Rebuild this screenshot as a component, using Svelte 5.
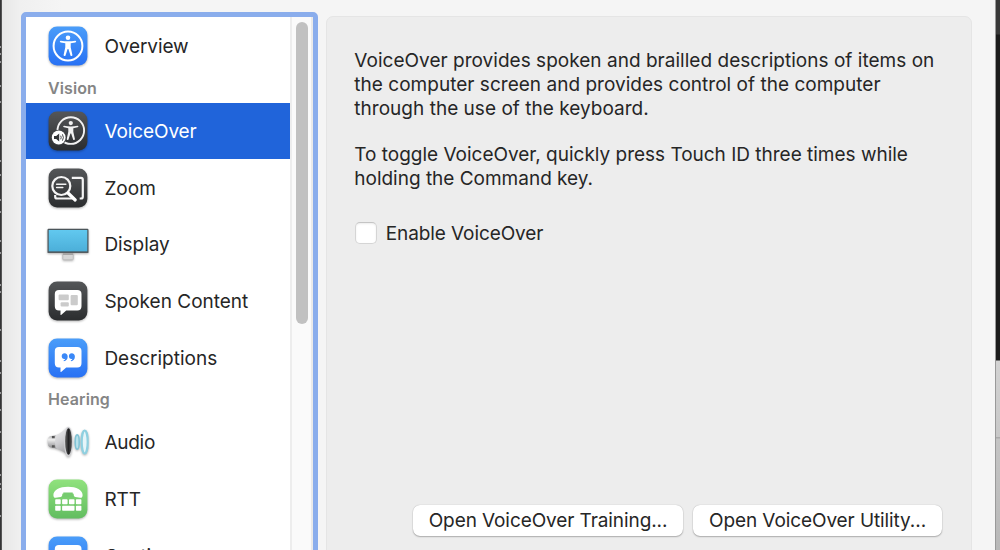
<script>
  const sections = [
    { items: [{ id: 'overview', label: 'Overview', ls: -0.1 }] },
    {
      title: 'Vision',
      items: [
        { id: 'voiceover', label: 'VoiceOver', selected: true, ls: -0.1 },
        { id: 'zoom', label: 'Zoom', ls: 0 },
        { id: 'display', label: 'Display', ls: -0.05 },
        { id: 'spoken', label: 'Spoken Content', ls: 0 },
        { id: 'descriptions', label: 'Descriptions', ls: 0 }
      ]
    },
    {
      title: 'Hearing',
      items: [
        { id: 'audio', label: 'Audio', ls: -0.25 },
        { id: 'rtt', label: 'RTT', ls: -0.1 },
        { id: 'captions', label: 'Captions', ls: -0.05 }
      ]
    }
  ];
  const tiles = {
    overview: 'blue', voiceover: 'dark', zoom: 'dark', spoken: 'dark',
    descriptions: 'blue', rtt: 'green', captions: 'blue'
  };
  const marks = [46, 53, 61, 85, 101, 139, 160, 174, 199, 211, 240, 252, 284, 291, 329, 360, 372, 392, 409, 431, 449, 474, 483, 488, 515];
</script>

{#snippet person()}
  <circle cx="0" cy="-8.2" r="2.3" />
  <path d="M-7.2-5.3 Q0-4 7.2-5.3 Q8.2-5.3 8.200-4.500 Q8.100-3.700 7.300-3.600 L2.700-2.700 V1.200 L4.400 9 Q4.400 10.100 3.500 10.100 Q2.700 10.100 2.400 9.200 L.4 3.100 H-.4 L-2.400 9.200 Q-2.700 10.100-3.500 10.100 Q-4.400 10.100-4.400 9 L-2.700 1.200 V-2.700 L-7.300-3.600 Q-8.100-3.700-8.200-4.500 Q-8.200-5.300-7.200-5.300Z" />
{/snippet}

<svg class="defs" width="0" height="0" aria-hidden="true">
  <defs>
    <linearGradient id="blue" x2="0" y2="1"><stop stop-color="#4a9df9" /><stop offset="1" stop-color="#2871f4" /></linearGradient>
    <linearGradient id="dark" x2="0" y2="1"><stop stop-color="#545658" /><stop offset="1" stop-color="#2b2d2f" /></linearGradient>
    <linearGradient id="green" x2="0" y2="1"><stop stop-color="#90e27d" /><stop offset="1" stop-color="#62bd60" /></linearGradient>
    <linearGradient id="screen" x2="0" y2="1"><stop stop-color="#62c9f0" /><stop offset="1" stop-color="#4baed8" /></linearGradient>
    <linearGradient id="cone" x2="0.3" y2="1"><stop stop-color="#f2f2f3" /><stop offset=".55" stop-color="#cfcfd2" /><stop offset="1" stop-color="#a3a3a6" /></linearGradient>
    <linearGradient id="rear" x2="0" y2="1"><stop stop-color="#b0b0b2" /><stop offset=".35" stop-color="#eee" /><stop offset="1" stop-color="#858588" /></linearGradient>
    <linearGradient id="mouth"><stop stop-color="#666" /><stop offset=".5" stop-color="#222224" /><stop offset="1" stop-color="#555" /></linearGradient>
  </defs>
</svg>

<div class="desktop">
  <div class="edge left">
    {#each marks as y}<i style="top:{y}px"></i>{/each}
  </div>
  <main>
    <aside>
      <nav>
        {#each sections as section}
          {#if section.title}<h2>{section.title}</h2>{/if}
          {#each section.items as item}
            <div class="row" class:selected={item.selected}>
              <svg class="icon" width="44" height="44" viewBox="0 0 44 44">
                {#if tiles[item.id]}
                  <rect x="2.6" y="2.6" width="38.8" height="38.8" rx="8.5" fill="url(#{tiles[item.id]})" />
                {/if}
                {#if item.id === 'overview'}
                  <circle cx="22" cy="22" r="14.4" fill="none" stroke="#fff" stroke-width="2" />
                  <g fill="#fff" transform="translate(22 22)">{@render person()}</g>
                {:else if item.id === 'voiceover'}
                  <circle cx="24.8" cy="21.6" r="13.3" fill="none" stroke="#f2f2f2" stroke-width="1.9" />
                  <g fill="#f2f2f2" transform="translate(24.8 21.7) scale(.93)">{@render person()}</g>
                  <circle cx="12.7" cy="28.5" r="7.8" fill="#404244" />
                  <circle cx="12.7" cy="28.5" r="6.9" fill="#fff" />
                  <path d="M8 27h2.2l3-2.6v8.2l-3-2.6H8Z" fill="#333537" />
                  <path d="M14.7 26.7q1 1.8 0 3.6M16.4 25.3q2 3.2 0 6.4" fill="none" stroke="#333537" stroke-width=".9" />
                {:else if item.id === 'zoom'}
                  <path d="M25.8 11.9H35q1.8 0 1.8 1.8v17q0 1.8-1.8 1.8h-1.3M27 32.5H11q-1.8 0-1.8-1.8V29" fill="none" stroke="#f4f4f4" stroke-width="2.2" />
                  <circle cx="15.3" cy="20" r="9" fill="none" stroke="#f4f4f4" stroke-width="2.2" />
                  <path d="m22 27 7.2 7" stroke="#fff" stroke-width="3.2" stroke-linecap="round" />
                  <path d="M10.6 18.3h9.2M10.6 21.6h6.2" stroke="#f4f4f4" stroke-width="1.5" stroke-linecap="round" />
                {:else if item.id === 'display'}
                  <path d="M16.8 31h10.4v6q0 .8-.8.8h-8.8q-.8 0-.8-.8Z" fill="#d6d6d6" stroke="#b5b5b5" stroke-width=".7" />
                  <path d="M17 31h10v2H17Z" fill="#a5a5a5" />
                  <rect x="2.1" y="7.4" width="39.8" height="22.7" rx=".5" fill="url(#screen)" stroke="#4b555a" stroke-width="1.2" />
                  <path d="M1.6 30.3h40.8" stroke="#555c60" stroke-width="1.2" />
                {:else if item.id === 'spoken'}
                  <path d="M13 10.9h18.3q4.2 0 4.2 4.2v12.2q0 4.2-4.2 4.2H20.2l-4.8 4.3q-.9.8-.9-.4v-3.9H13q-4.2 0-4.2-4.2V15.1q0-4.2 4.2-4.2Z" fill="#fff" />
                  <rect x="12.6" y="15.5" width="10.2" height="5.8" rx="1" fill="#cbcbcb" />
                  <rect x="24.6" y="16" width="7.2" height="10.3" rx="1" fill="#cbcbcb" />
                  <rect x="14.6" y="23.2" width="8.2" height="4.4" rx="1" fill="#cbcbcb" />
                {:else if item.id === 'descriptions'}
                  <path d="M13 10.9h18.3q4.2 0 4.2 4.2v12.2q0 4.2-4.2 4.2H20.2l-4.8 4.3q-.9.8-.9-.4v-3.9H13q-4.2 0-4.2-4.2V15.1q0-4.2 4.2-4.2Z" fill="#fff" />
                  <g fill="#3a88f7">
                    <path d="M18.5 17.2c2 0 3.2 1.5 3.2 3.5 0 2.4-1.6 4.3-3.8 4.6l-.4-.9q1.6-.5 1.8-1.7-.4.2-1 .2c-1.6 0-2.6-1.1-2.6-2.7 0-1.7 1.2-3 2.8-3Z" />
                    <path d="M25.700 17.200c2 0 3.200 1.500 3.200 3.500 0 2.400-1.600 4.300-3.800 4.600l-.4-.9q1.600-.5 1.800-1.700-.4.2-1 .2c-1.600 0-2.600-1.100-2.600-2.700 0-1.700 1.200-3 2.800-3Z" />
                  </g>
                {:else if item.id === 'audio'}
                  <path d="M4 16.3 11 15v13.5l-7-1.200Q1.700 26.500 1.700 21.800T4 16.300Z" fill="url(#rear)" />
                  <path d="M9.700 15.200Q16 13.200 20.700 7.300L23 36.400Q17.500 30.700 9.700 28.300Q8.200 21.700 9.700 15.200Z" fill="url(#cone)" />
                  <path d="M7.300 16v2.200M7.300 25.300v2.200" stroke="#555" stroke-width="2.800" />
                  <ellipse cx="22.300" cy="21.800" rx="4.300" ry="15" fill="#d0d0d3" />
                  <ellipse cx="22.500" cy="21.500" rx="3.400" ry="13.200" fill="url(#mouth)" />
                  <ellipse cx="31.200" cy="22" rx="2" ry="7.100" fill="#b9e2eb" stroke="#82c4d6" stroke-width="1.600" />
                  <ellipse cx="38.700" cy="22" rx="3" ry="11.500" fill="#e6f5f9" stroke="#8fd0e0" stroke-width="2.200" />
                {:else if item.id === 'rtt'}
                  <path d="M22 9.800c8.500 0 14.600 3.500 14.600 8.100 0 2-.8 3-2.200 2.800l-5-.7q-1.500-.2-1.600-1.700l-.1-1.500q-5.700-1.600-11.400 0l-.1 1.500q-.1 1.500-1.600 1.700l-5 .7q-2.200.2-2.200-2.800c0-4.600 6.100-8.100 14.600-8.100Z" fill="#fff" />
                  <path d="M17.300 15.600h9.400v2.600l2.200 2.200H15.100l2.200-2.200Z" fill="#76cb6f" />
                  <g fill="#fff">
                    {#each [9.2, 16.1, 23, 29.9] as x}<rect {x} y="22.200" width="5.500" height="5" rx=".8" />{/each}
                    <rect x="9.200" y="28.800" width="5.500" height="5" rx=".8" />
                    <rect x="16.100" y="28.800" width="12.400" height="5" rx=".8" />
                    <rect x="29.900" y="28.800" width="5.500" height="5" rx=".8" />
                  </g>
                {:else if item.id === 'captions'}
                  <rect x="8.800" y="10.900" width="26.700" height="22" rx="4" fill="#fff" />
                {/if}
              </svg>
              <span style="letter-spacing:{item.ls}px">{item.label}</span>
            </div>
          {/each}
        {/each}
      </nav>
      <div class="track"><div class="thumb"></div></div>
    </aside>
    <section>
      <p class="about">VoiceOver provides spoken and brailled descriptions of items on<br />the computer screen and provides control of the computer<br />through the use of the keyboard.</p>
      <p>To toggle VoiceOver, quickly press Touch ID three times while<br />holding the Command key.</p>
      <div class="check"><span class="box"></span><span>Enable VoiceOver</span></div>
      <footer>
        <button class="training">Open VoiceOver Training...</button>
        <button class="utility">Open VoiceOver Utility...</button>
      </footer>
    </section>
  </main>
  <div class="edge right"></div>
</div>

<style>
  :global(body) { margin: 0; overflow: hidden; }
  .defs { position: absolute; }
  .desktop {
    display: flex; width: 1000px; height: 550px; overflow: hidden;
    font-family: Inter, "Liberation Sans", sans-serif; font-size: 19px; color: #262626;
  }
  .edge { flex: none; box-sizing: border-box; }
  .left { position: relative; width: 2px; background: #343436; border-right: 1px solid #555; overflow: hidden; }
  .left i { position: absolute; left: 0; width: 2px; height: 2px; background: #98989a; }
  .right {
    width: 5px; border-left: 1px solid #999;
    background: linear-gradient(#383838 0 34px, #1b1b1b 35px 360px, #d2d2d2 361px, #c8c8c8 437px, #aaa 437px 438px, #c4c4c4 439px, #b8b8b8);
  }
  main {
    flex: 1; display: flex; box-sizing: border-box; padding: 12px 0 0 19px; height: 550px;
    background: linear-gradient(90deg, #e7e7e7, #f0f0f0 18px, #f5f5f5 60px);
  }
  aside {
    flex: none; display: flex; box-sizing: border-box; width: 297px; height: 560px;
    border: 5px solid #8aadec; border-radius: 5px 5px 0 0; background: #fff; overflow: hidden;
  }
  nav { width: 264px; padding-top: 1px; }
  h2 {
    margin: 0; padding-left: 22px; height: 28.3px; line-height: 27px;
    font-size: 16px; font-weight: 600; color: #858585; letter-spacing: .1px;
  }
  .row { display: flex; align-items: center; height: 56.6px; padding-left: 20.4px; box-sizing: border-box; }
  .row span { margin-left: 14px; padding-top: 1px; line-height: 25px; white-space: nowrap; }
  .selected { background: #2064da; color: #fff; }
  .icon { flex: none; filter: drop-shadow(0 1px 1px rgba(0, 0, 0, .3)); }
  .track {
    flex: 1; box-sizing: border-box; padding: 5px 3px 0 4px; background: #fafafa;
    border-left: 2px solid #ededed; border-right: 2px solid #eaeaea;
  }
  .thumb { width: 12px; height: 302px; border-radius: 6px; background: #c1c1c1; }
  section {
    box-sizing: border-box; width: 646px; height: 560px; margin: 4px 0 0 8px; padding: 32px 29px 0 27.3px;
    border: 1px solid #e5e5e5; border-radius: 7px; background: #ededed;
    display: flex; flex-direction: column;
  }
  p { margin: 0 0 22px; line-height: 24px; white-space: nowrap; letter-spacing: -.01px; }
  .about { letter-spacing: .025px; }
  .check { display: flex; align-items: center; height: 24px; margin-top: 8px; letter-spacing: -.09px; }
  .box {
    box-sizing: border-box; width: 22px; height: 22px; margin: -1px 8.4px 0 1px;
    border: 1px solid #d5d5d5; border-top-color: #c4c4c4; border-radius: 5px;
    background: #fff; box-shadow: inset 0 1px 2px rgba(0, 0, 0, .08);
  }
  footer { display: flex; justify-content: flex-end; gap: 10px; margin-top: 260px; }
  button {
    box-sizing: border-box; height: 31px; padding: 0; border: 0; border-radius: 7px; background: #fff;
    font: inherit; color: inherit; line-height: 30px; white-space: nowrap; letter-spacing: -.09px;
    box-shadow: 0 0 1px rgba(0, 0, 0, .3), 0 1px 1.5px rgba(0, 0, 0, .25);
  }
  .training { width: 270px; }
  .utility { width: 249px; }
</style>
